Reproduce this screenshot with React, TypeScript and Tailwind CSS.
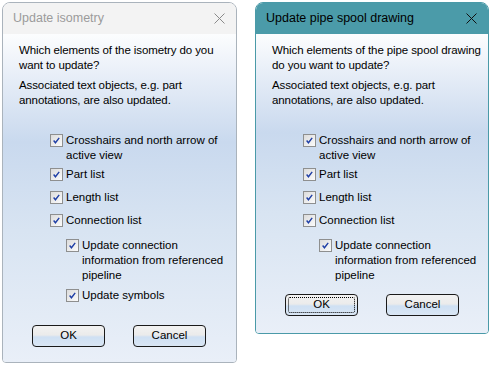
import React from 'react';

const font = { fontFamily: '"Liberation Sans", Arial, sans-serif' };

// kleiner Haken-Checkbox im Win7-Stil
const Check = () => (
    <div className="w-[13px] h-[13px] shrink-0 border border-[#8e8f8f] bg-[linear-gradient(135deg,#dcdcdc,#fbfbfb)] p-px">
        <svg viewBox="0 0 11 11" className="w-full h-full">
            <path d="M2 5.5 L4.2 8.3 L8.8 2.2" fill="none" stroke="#1f3fa6" strokeWidth="1.7" />
        </svg>
    </div>
);

const Item = ({ children, className = '' }: { children: React.ReactNode; className?: string }) => (
    <div className={`flex items-start gap-[3px] ${className}`}>
        <div className="pt-px"><Check /></div>
        <div className="leading-[15px] whitespace-nowrap">{children}</div>
    </div>
);

const Btn = ({ label, focus = false }: { label: string; focus?: boolean }) => (
    <div className="w-[73px] h-[22px] rounded-[4px] border border-[#1a1a1a] bg-[linear-gradient(to_bottom,#f2f2f2_0%,#ebebeb_45%,#cfe0f3_55%,#d9e6f4_100%)] flex items-center justify-center p-[2px]">
        <div className={`w-full h-full flex items-center justify-center rounded-[2px] ${focus ? 'border border-dotted border-black' : ''}`}>
            {label}
        </div>
    </div>
);

const CloseX = ({ color }: { color: string }) => (
    <svg width="11" height="11" viewBox="0 0 11 11">
        <path d="M0.5 0.5 L10.5 10.5 M10.5 0.5 L0.5 10.5" stroke={color} strokeWidth="1" />
    </svg>
);

interface DialogProps {
    title: string;
    question: React.ReactNode;
    active?: boolean;
    symbols?: boolean;
}

const Dialog: React.FC<DialogProps> = ({ title, question, active = false, symbols = false }) => (
    <div
        className={`flex flex-col rounded-t-[8px] rounded-b-[4px] border overflow-hidden ${active ? 'w-[234px] h-[332px] border-[#4a9aa8]' : 'w-[235px] h-[361px] border-[#aab3bc]'}`}
    >
        <div className={`h-[31px] shrink-0 flex items-center justify-between pl-[10px] pr-[11px] text-[12.5px] ${active ? 'bg-[#4b9ba9] text-black' : 'bg-[#f3f3f3] text-[#9b9b9b]'}`}>
            <span className="whitespace-nowrap">{title}</span>
            <CloseX color={active ? '#111' : '#8a8a8a'} />
        </div>
        <div className="flex-1 flex flex-col bg-[linear-gradient(to_bottom,#fcfdfe_0%,#e9eff8_12%,#c9d9ee_33%,#d8e4f2_60%,#e9eff8_100%)] text-[11.5px] text-black">
            <div className="pl-[16px] pt-[9px] leading-[15px] whitespace-nowrap tracking-[-0.1px]">
                <p>{question}</p>
                <p className="mt-[5px]">Associated text objects, e.g. part<br />annotations, are also updated.</p>
            </div>
            <div className="pl-[47px] mt-[25px] flex flex-col">
                <Item>Crosshairs and north arrow of<br />active view</Item>
                <Item className="mt-[4px]">Part list</Item>
                <Item className="mt-[8px]">Length list</Item>
                <Item className="mt-[8px]">Connection list</Item>
                <div className="pl-[16px] flex flex-col">
                    <Item className="mt-[10px]">Update connection<br />information from referenced<br />pipeline</Item>
                    {symbols && <Item className="mt-[5px]">Update symbols</Item>}
                </div>
            </div>
            <div className={`flex pl-[29px] gap-[28px] ${symbols ? 'mt-[22px]' : 'mt-[11px]'}`}>
                <Btn label="OK" focus={active} />
                <Btn label="Cancel" />
            </div>
        </div>
    </div>
);

export default function App() {
    return (
        <div className="w-[493px] h-[366px] bg-white flex items-start pt-[2px] pl-[2px] gap-[18px]" style={font}>
            <Dialog
                title="Update isometry"
                question={<>Which elements of the isometry do you<br />want to update?</>}
                symbols
            />
            <Dialog
                title="Update pipe spool drawing"
                question={<>Which elements of the pipe spool drawing<br />do you want to update?</>}
                active
            />
        </div>
    );
}
